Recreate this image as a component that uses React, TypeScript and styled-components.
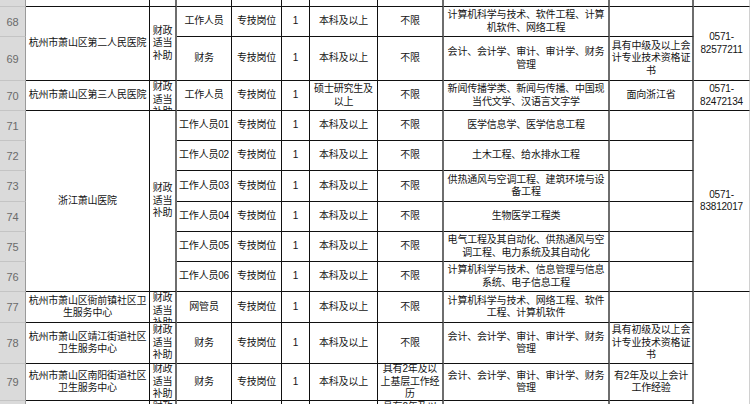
import React from "react";
import styled, { createGlobalStyle } from "styled-components";

const GlobalStyle = createGlobalStyle`
  html, body { margin: 0; padding: 0; background: #ffffff; }
  body { font-family: "Liberation Sans", "Noto Sans CJK SC", sans-serif; }
  #root { width: 750px; height: 404px; overflow: hidden; }
`;

const Sheet = styled.div`
  display: grid;
  grid-template-columns: 26px 124px 27px 55px 50px 28px 68px 66px 166px 84px 56px;
  grid-template-rows: 7px 30px 44px 30px 30px 30px 31px 30px 30px 30px 31px 41px 37px 40px;
  width: 750px;
  height: 404px;
  overflow: hidden;
  background: #ffffff;
`;

const rightBorder = (c: number) => {
  if (c === 3 || c === 8 || c === 9 || c === 10) return "2px solid #6e6e6e";
  if (c === 11) return "1px solid #d0d0d0";
  return "1px solid #111";
};

const Cell = styled.div<{ $r: number; $c: number; $rs: number; $top: boolean }>`
  grid-row: ${(p) => p.$r} / span ${(p) => p.$rs};
  grid-column: ${(p) => p.$c} / span 1;
  box-sizing: border-box;
  border-right: ${(p) => rightBorder(p.$c)};
  border-bottom: 1px solid #111;
  display: flex;
  flex-direction: column;
  align-items: center;
  justify-content: ${(p) => (p.$top ? "flex-start" : "center")};
  overflow: hidden;
  font-family: "Liberation Sans", "Noto Sans CJK SC", sans-serif;
  font-size: 10px;
  line-height: 12.5px;
  letter-spacing: -0.2px;
  color: #141414;
  text-align: center;
`;

const RowHead = styled.div<{ $r: number }>`
  grid-row: ${(p) => p.$r} / span 1;
  grid-column: 1 / span 1;
  box-sizing: border-box;
  background: #dadada;
  border-right: 1px solid #9a9a9a;
  border-bottom: 1px solid #c4c4c4;
  display: flex;
  align-items: center;
  justify-content: center;
  font-family: "Liberation Sans", sans-serif;
  font-size: 11px;
  color: #6a6a6a;
  overflow: hidden;
`;

const Line = styled.span`
  display: block;
  white-space: nowrap;
`;

type C = { r: number; c: number; rs?: number; t?: string[]; top?: boolean };

const fiscal = ["财政", "适当", "补助"];
const acct = ["会计、会计学、审计、审计学、财务", "管理"];

const cells: C[] = [
  // row 67 (partial)
  ...[2, 3, 4, 5, 6, 7, 8, 9, 10, 11].map((c) => ({ r: 1, c })),
  // rows 68-69
  { r: 2, c: 2, rs: 2, t: ["杭州市萧山区第二人民医院"] },
  { r: 2, c: 3, rs: 2, t: fiscal },
  { r: 2, c: 4, t: ["工作人员"] },
  { r: 2, c: 5, t: ["专技岗位"] },
  { r: 2, c: 6, t: ["1"] },
  { r: 2, c: 7, t: ["本科及以上"] },
  { r: 2, c: 8, t: ["不限"] },
  { r: 2, c: 9, t: ["计算机科学与技术、软件工程、计算", "机软件、网络工程"] },
  { r: 2, c: 10 },
  { r: 2, c: 11, rs: 2, t: ["0571-", "82577211"] },
  { r: 3, c: 4, t: ["财务"] },
  { r: 3, c: 5, t: ["专技岗位"] },
  { r: 3, c: 6, t: ["1"] },
  { r: 3, c: 7, t: ["本科及以上"] },
  { r: 3, c: 8, t: ["不限"] },
  { r: 3, c: 9, t: acct },
  { r: 3, c: 10, t: ["具有中级及以上会", "计专业技术资格证", "书"] },
  // row 70
  { r: 4, c: 2, t: ["杭州市萧山区第三人民医院"] },
  { r: 4, c: 3, t: fiscal, top: true },
  { r: 4, c: 4, t: ["工作人员"] },
  { r: 4, c: 5, t: ["专技岗位"] },
  { r: 4, c: 6, t: ["1"] },
  { r: 4, c: 7, t: ["硕士研究生及", "以上"] },
  { r: 4, c: 8, t: ["不限"] },
  { r: 4, c: 9, t: ["新闻传播学类、新闻与传播、中国现", "当代文学、汉语言文字学"] },
  { r: 4, c: 10, t: ["面向浙江省"] },
  { r: 4, c: 11, t: ["0571-", "82472134"] },
  // rows 71-76
  { r: 5, c: 2, rs: 6, t: ["浙江萧山医院"] },
  { r: 5, c: 3, rs: 6, t: fiscal },
  { r: 5, c: 11, rs: 6, t: ["0571-", "83812017"] },
  ...[
    "医学信息学、医学信息工程",
    "土木工程、给水排水工程",
    "供热通风与空调工程、建筑环境与设|备工程",
    "生物医学工程类",
    "电气工程及其自动化、供热通风与空|调工程、电力系统及其自动化",
    "计算机科学与技术、信息管理与信息|系统、电子信息工程",
  ].flatMap((m, i) => {
    const r = 5 + i;
    return [
      { r, c: 4, t: ["工作人员0" + (i + 1)] },
      { r, c: 5, t: ["专技岗位"] },
      { r, c: 6, t: ["1"] },
      { r, c: 7, t: ["本科及以上"] },
      { r, c: 8, t: ["不限"] },
      { r, c: 9, t: m.split("|") },
      { r, c: 10 },
    ] as C[];
  }),
  // row 77
  { r: 11, c: 2, t: ["杭州市萧山区衙前镇社区卫", "生服务中心"] },
  { r: 11, c: 3, t: fiscal, top: true },
  { r: 11, c: 4, t: ["网管员"] },
  { r: 11, c: 5, t: ["专技岗位"] },
  { r: 11, c: 6, t: ["1"] },
  { r: 11, c: 7, t: ["本科及以上"] },
  { r: 11, c: 8, t: ["不限"] },
  { r: 11, c: 9, t: ["计算机科学与技术、网络工程、软件", "工程、计算机软件"] },
  { r: 11, c: 10 },
  { r: 11, c: 11, rs: 4 },
  // row 78
  { r: 12, c: 2, t: ["杭州市萧山区靖江街道社区", "卫生服务中心"] },
  { r: 12, c: 3, t: fiscal },
  { r: 12, c: 4, t: ["财务"] },
  { r: 12, c: 5, t: ["专技岗位"] },
  { r: 12, c: 6, t: ["1"] },
  { r: 12, c: 7, t: ["本科及以上"] },
  { r: 12, c: 8, t: ["不限"] },
  { r: 12, c: 9, t: acct },
  { r: 12, c: 10, t: ["具有初级及以上会", "计专业技术资格证", "书"] },
  // row 79
  { r: 13, c: 2, t: ["杭州市萧山区南阳街道社区", "卫生服务中心"] },
  { r: 13, c: 3, t: fiscal },
  { r: 13, c: 4, t: ["财务"] },
  { r: 13, c: 5, t: ["专技岗位"] },
  { r: 13, c: 6, t: ["1"] },
  { r: 13, c: 7, t: ["本科及以上"] },
  { r: 13, c: 8, t: ["具有2年及以", "上基层工作经", "历"] },
  { r: 13, c: 9, t: acct },
  { r: 13, c: 10, t: ["有2年及以上会计", "工作经验"] },
  // row 80 (partial)
  { r: 14, c: 2 },
  { r: 14, c: 3, t: fiscal, top: true },
  { r: 14, c: 4 },
  { r: 14, c: 5 },
  { r: 14, c: 6 },
  { r: 14, c: 7 },
  { r: 14, c: 8, t: ["具有2年及以", "上基层工作经", "历"], top: true },
  { r: 14, c: 9 },
  { r: 14, c: 10 },
];

const rowNums = ["67", "68", "69", "70", "71", "72", "73", "74", "75", "76", "77", "78", "79", "80"];

export default function App() {
  return (
    <>
      <GlobalStyle />
      <Sheet>
        {rowNums.map((n, i) => (
          <RowHead key={"h" + n} $r={i + 1}>
            {i === 0 ? "" : n}
          </RowHead>
        ))}
        {cells.map((cell, i) => (
          <Cell key={i} $r={cell.r} $c={cell.c} $rs={cell.rs || 1} $top={!!cell.top}>
            {(cell.t || []).map((l, j) => (
              <Line key={j}>{l}</Line>
            ))}
          </Cell>
        ))}
      </Sheet>
    </>
  );
}
